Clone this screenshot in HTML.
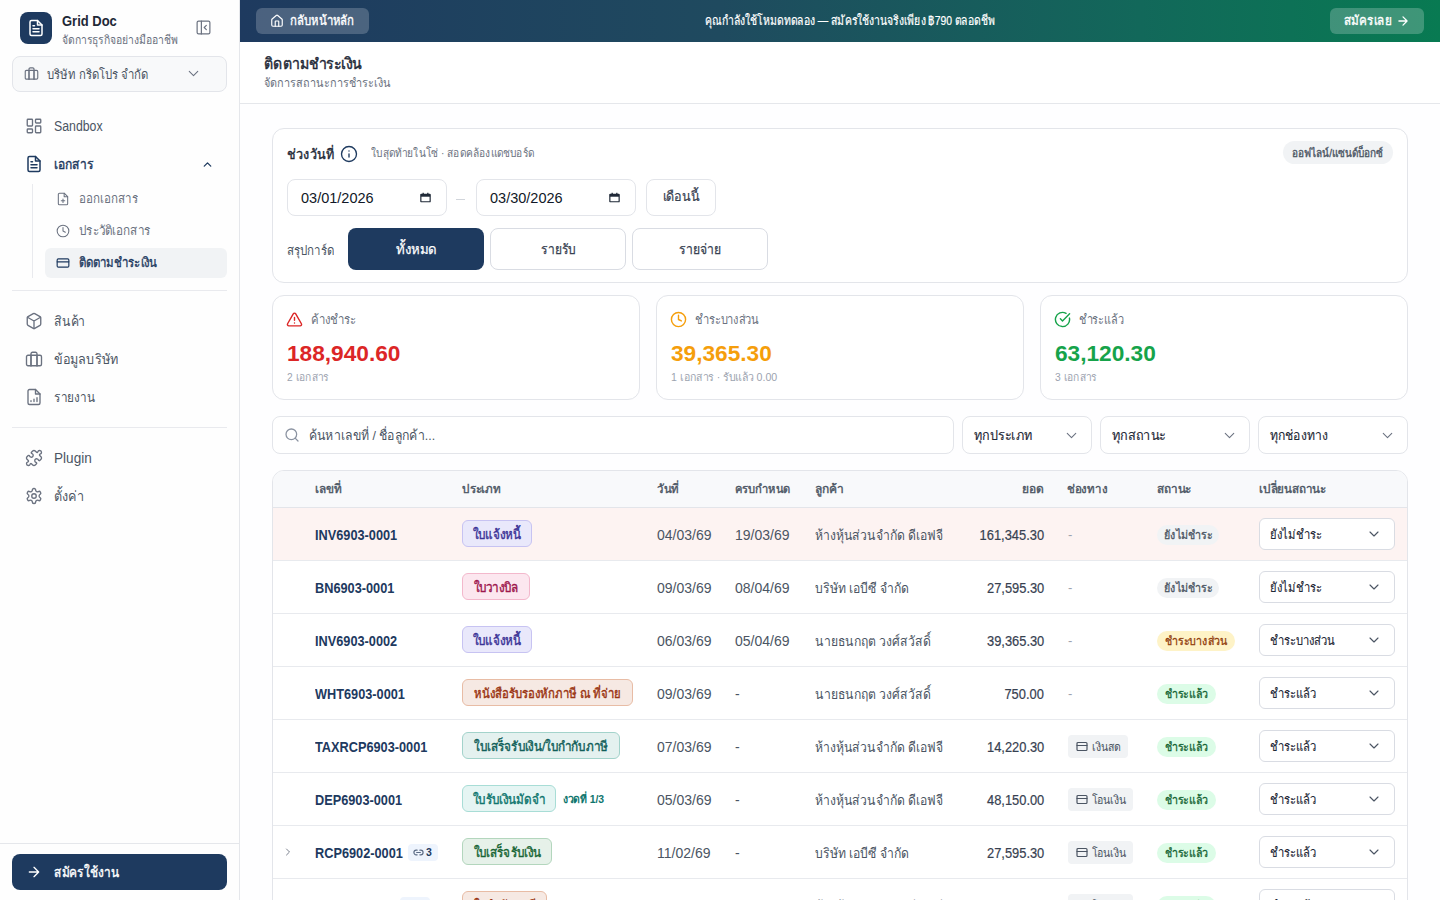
<!DOCTYPE html>
<html><head><meta charset="utf-8"><style>
*{box-sizing:border-box;margin:0;padding:0}
html,body{width:1440px;height:900px;overflow:hidden;background:#fefeff;font-family:"Liberation Sans",sans-serif;color:#1f2937}
.a{position:absolute}
.t{white-space:nowrap}
.k{display:inline-block;transform:scaleX(var(--k));transform-origin:0 50%}
svg{display:block}
.ic{fill:none;stroke:currentColor;stroke-linecap:round;stroke-linejoin:round}
</style></head><body>
<div class="a" style="left:0px;top:0px;width:240px;height:900px;background:#fefefe;border-right:1px solid #e5e7eb"></div>
<div class="a" style="left:20px;top:12px;width:32px;height:32px;border-radius:8px;background:#1e3a5f"></div>
<svg class="a ic" style="left:27px;top:19px;color:#fff;" width="18" height="18" viewBox="0 0 24 24" stroke-width="2"><path d="M14 2H6a2 2 0 0 0-2 2v16a2 2 0 0 0 2 2h12a2 2 0 0 0 2-2V8z"/><path d="M14 2v6h6"/><path d="M16 13H8M16 17H8M10 9H8"/></svg>
<div class="a t" style="left:62px;top:12px;font-size:15px;line-height:18px;color:#1f2937;font-weight:bold;"><span class="k" style="--k:0.865">Grid Doc</span></div>
<div class="a t" style="left:62px;top:32px;font-size:12px;line-height:16px;color:#6b7280;font-weight:normal;"><span class="k" style="--k:0.865">จัดการธุรกิจอย่างมืออาชีพ</span></div>
<svg class="a ic" style="left:195px;top:19px;color:#6b7280;" width="17" height="17" viewBox="0 0 24 24" stroke-width="1.7"><rect x="3" y="3" width="18" height="18" rx="2"/><path d="M9 3v18M16 15l-3-3 3-3"/></svg>
<div class="a" style="left:12px;top:56px;width:215px;height:36px;border:1px solid #e3e5ea;border-radius:8px;background:#f8f9fa"></div>
<svg class="a ic" style="left:24px;top:66px;color:#6b7280;" width="15" height="15" viewBox="0 0 24 24" stroke-width="1.8"><rect x="2" y="7" width="20" height="14" rx="2"/><path d="M16 21V5a2 2 0 0 0-2-2h-4a2 2 0 0 0-2 2v16"/><path d="M8 7v14M16 7v14"/></svg>
<div class="a t" style="left:47px;top:66px;font-size:13px;line-height:17px;color:#4b5563;font-weight:normal;"><span class="k" style="--k:0.87">บริษัท กริดโปร จำกัด</span></div>
<svg class="a ic" style="left:185px;top:65px;color:#6b7280;" width="17" height="17" viewBox="0 0 24 24" stroke-width="1.5"><path d="M6 9l6 6 6-6"/></svg>
<svg class="a ic" style="left:25px;top:117px;color:#6b7280;" width="18" height="18" viewBox="0 0 24 24" stroke-width="1.8"><rect x="3" y="3" width="7" height="9" rx="1"/><rect x="14" y="3" width="7" height="5" rx="1"/><rect x="14" y="12" width="7" height="9" rx="1"/><rect x="3" y="16" width="7" height="5" rx="1"/></svg>
<div class="a t" style="left:54px;top:117px;font-size:14px;line-height:18px;color:#4b5563;font-weight:normal;"><span class="k" style="--k:0.88">Sandbox</span></div>
<svg class="a ic" style="left:25px;top:155px;color:#1e3a5f;" width="18" height="18" viewBox="0 0 24 24" stroke-width="2"><path d="M14 2H6a2 2 0 0 0-2 2v16a2 2 0 0 0 2 2h12a2 2 0 0 0 2-2V8z"/><path d="M14 2v6h6"/><path d="M16 13H8M16 17H8M10 9H8"/></svg>
<div class="a t" style="left:54px;top:155px;font-size:14px;line-height:18px;color:#1e3a5f;font-weight:normal;-webkit-text-stroke:0.45px #1e3a5f;"><span class="k" style="--k:0.86">เอกสาร</span></div>
<svg class="a ic" style="left:201px;top:158px;color:#1e3a5f;" width="13" height="13" viewBox="0 0 24 24" stroke-width="2.4"><path d="M18 15l-6-6-6 6"/></svg>
<div class="a" style="left:32px;top:184px;width:1px;height:94px;background:#e9eaee"></div>
<svg class="a ic" style="left:56px;top:192px;color:#6b7280;" width="14" height="14" viewBox="0 0 24 24" stroke-width="1.8"><path d="M14 2H6a2 2 0 0 0-2 2v16a2 2 0 0 0 2 2h12a2 2 0 0 0 2-2V8z"/><path d="M14 2v6h6"/><path d="M12 18v-6M9 15h6"/></svg>
<div class="a t" style="left:79px;top:190px;font-size:13px;line-height:17px;color:#6b7280;font-weight:normal;"><span class="k" style="--k:0.89">ออกเอกสาร</span></div>
<svg class="a ic" style="left:56px;top:224px;color:#6b7280;" width="14" height="14" viewBox="0 0 24 24" stroke-width="1.8"><circle cx="12" cy="12" r="10"/><path d="M12 6v6l4 2"/></svg>
<div class="a t" style="left:79px;top:222px;font-size:13px;line-height:17px;color:#6b7280;font-weight:normal;"><span class="k" style="--k:0.9">ประวัติเอกสาร</span></div>
<div class="a" style="left:45px;top:248px;width:182px;height:30px;background:#f1f3f5;border-radius:6px"></div>
<svg class="a ic" style="left:56px;top:256px;color:#1e3a5f;" width="14" height="14" viewBox="0 0 24 24" stroke-width="2"><rect x="2" y="5" width="20" height="14" rx="2"/><path d="M2 10h20"/></svg>
<div class="a t" style="left:79px;top:254px;font-size:13px;line-height:17px;color:#1e3a5f;font-weight:normal;-webkit-text-stroke:0.35px #1e3a5f;"><span class="k" style="--k:0.88">ติดตามชำระเงิน</span></div>
<div class="a" style="left:12px;top:290px;width:215px;height:1px;background:#e9eaee"></div>
<svg class="a ic" style="left:25px;top:312px;color:#6b7280;" width="18" height="18" viewBox="0 0 24 24" stroke-width="1.8"><path d="M21 16V8a2 2 0 0 0-1-1.73l-7-4a2 2 0 0 0-2 0l-7 4A2 2 0 0 0 3 8v8a2 2 0 0 0 1 1.73l7 4a2 2 0 0 0 2 0l7-4A2 2 0 0 0 21 16z"/><path d="M3.3 7L12 12l8.7-5M12 22V12"/></svg>
<div class="a t" style="left:54px;top:312px;font-size:14px;line-height:18px;color:#4b5563;font-weight:normal;"><span class="k" style="--k:0.87">สินค้า</span></div>
<svg class="a ic" style="left:25px;top:350px;color:#6b7280;" width="18" height="18" viewBox="0 0 24 24" stroke-width="1.8"><rect x="2" y="7" width="20" height="14" rx="2"/><path d="M16 21V5a2 2 0 0 0-2-2h-4a2 2 0 0 0-2 2v16"/><path d="M8 7v14M16 7v14"/></svg>
<div class="a t" style="left:54px;top:350px;font-size:14px;line-height:18px;color:#4b5563;font-weight:normal;"><span class="k" style="--k:0.9">ข้อมูลบริษัท</span></div>
<svg class="a ic" style="left:25px;top:388px;color:#6b7280;" width="18" height="18" viewBox="0 0 24 24" stroke-width="1.8"><path d="M14 2H6a2 2 0 0 0-2 2v16a2 2 0 0 0 2 2h12a2 2 0 0 0 2-2V8z"/><path d="M14 2v6h6"/><path d="M8 18v-1M12 18v-3M16 18v-5"/></svg>
<div class="a t" style="left:54px;top:388px;font-size:14px;line-height:18px;color:#4b5563;font-weight:normal;"><span class="k" style="--k:0.84">รายงาน</span></div>
<div class="a" style="left:12px;top:427px;width:215px;height:1px;background:#e9eaee"></div>
<svg class="a ic" style="left:25px;top:449px;color:#6b7280;" width="18" height="18" viewBox="0 0 24 24" stroke-width="1.8"><path d="M15.39 4.39a1 1 0 0 0 1.68-.47 2.5 2.5 0 1 1 3.01 3.01 1 1 0 0 0-.47 1.68l1.68 1.68a2.41 2.41 0 0 1 0 3.42l-1.61 1.61a.98.98 0 0 1-.84.28c-.47-.07-.8-.48-.97-.92a2.5 2.5 0 1 0-3.21 3.21c.44.17.85.5.92.97a.98.98 0 0 1-.28.84l-1.61 1.61a2.41 2.41 0 0 1-3.42 0l-1.68-1.68a1 1 0 0 0-1.68.47 2.5 2.5 0 1 1-3.01-3.01 1 1 0 0 0 .47-1.68l-1.68-1.68a2.41 2.41 0 0 1 0-3.42L4.27 8.7a.98.98 0 0 1 .84-.28c.47.07.8.48.97.92a2.5 2.5 0 1 0 3.21-3.21c-.44-.17-.85-.5-.92-.97a.98.98 0 0 1 .28-.84l1.61-1.61a2.41 2.41 0 0 1 3.42 0z"/></svg>
<div class="a t" style="left:54px;top:449px;font-size:14px;line-height:18px;color:#4b5563;font-weight:normal;"><span class="k" style="--k:0.97">Plugin</span></div>
<svg class="a ic" style="left:25px;top:487px;color:#6b7280;" width="18" height="18" viewBox="0 0 24 24" stroke-width="1.8"><path d="M12.22 2h-.44a2 2 0 0 0-2 2v.18a2 2 0 0 1-1 1.73l-.43.25a2 2 0 0 1-2 0l-.15-.08a2 2 0 0 0-2.73.73l-.22.38a2 2 0 0 0 .73 2.73l.15.1a2 2 0 0 1 1 1.72v.51a2 2 0 0 1-1 1.74l-.15.09a2 2 0 0 0-.73 2.73l.22.38a2 2 0 0 0 2.73.73l.15-.08a2 2 0 0 1 2 0l.43.25a2 2 0 0 1 1 1.73V20a2 2 0 0 0 2 2h.44a2 2 0 0 0 2-2v-.18a2 2 0 0 1 1-1.73l.43-.25a2 2 0 0 1 2 0l.15.08a2 2 0 0 0 2.73-.73l.22-.39a2 2 0 0 0-.73-2.73l-.15-.08a2 2 0 0 1-1-1.74v-.5a2 2 0 0 1 1-1.74l.15-.09a2 2 0 0 0 .73-2.73l-.22-.38a2 2 0 0 0-2.73-.73l-.15.08a2 2 0 0 1-2 0l-.43-.25a2 2 0 0 1-1-1.73V4a2 2 0 0 0-2-2z"/><circle cx="12" cy="12" r="3"/></svg>
<div class="a t" style="left:54px;top:487px;font-size:14px;line-height:18px;color:#4b5563;font-weight:normal;"><span class="k" style="--k:0.9">ตั้งค่า</span></div>
<div class="a" style="left:0px;top:843px;width:239px;height:1px;background:#e5e7eb"></div>
<div class="a" style="left:12px;top:854px;width:215px;height:36px;border-radius:8px;background:#1e3a5f"></div>
<svg class="a ic" style="left:26px;top:864px;color:#fff;" width="16" height="16" viewBox="0 0 24 24" stroke-width="2"><path d="M5 12h14M12 5l7 7-7 7"/></svg>
<div class="a t" style="left:54px;top:863px;font-size:14px;line-height:18px;color:#fff;font-weight:normal;-webkit-text-stroke:0.4px #fff;"><span class="k" style="--k:0.85">สมัครใช้งาน</span></div>
<div class="a" style="left:240px;top:0px;width:1200px;height:42px;background:linear-gradient(90deg,#1e3a5f 0%,#1f4a5f 40%,#12685a 75%,#087a52 100%)"></div>
<div class="a" style="left:256px;top:8px;width:113px;height:26px;border-radius:6px;background:rgba(255,255,255,.2)"></div>
<svg class="a ic" style="left:270px;top:14px;color:#fff;" width="14" height="14" viewBox="0 0 24 24" stroke-width="2"><path d="M15 21v-8a1 1 0 0 0-1-1h-4a1 1 0 0 0-1 1v8"/><path d="M3 10a2 2 0 0 1 .71-1.53l7-6a2 2 0 0 1 2.58 0l7 6A2 2 0 0 1 21 10v9a2 2 0 0 1-2 2H5a2 2 0 0 1-2-2z"/></svg>
<div class="a t" style="left:290px;top:12px;font-size:13px;line-height:18px;color:#fff;font-weight:normal;-webkit-text-stroke:0.35px #fff;"><span class="k" style="--k:0.87">กลับหน้าหลัก</span></div>
<div class="a t" style="left:250px;top:12px;font-size:13px;line-height:18px;color:#fff;font-weight:normal;-webkit-text-stroke:0.2px #fff;width:1200px;text-align:center;"><span class="k" style="--k:0.8;transform-origin:center 50%">คุณกำลังใช้โหมดทดลอง — สมัครใช้งานจริงเพียง ฿790 ตลอดชีพ</span></div>
<div class="a" style="left:1330px;top:8px;width:94px;height:26px;border-radius:6px;background:rgba(255,255,255,.22)"></div>
<div class="a t" style="left:1344px;top:12px;font-size:13px;line-height:18px;color:#fff;font-weight:normal;-webkit-text-stroke:0.35px #fff;"><span class="k" style="--k:0.9">สมัครเลย</span></div>
<svg class="a ic" style="left:1396px;top:14px;color:#fff;" width="14" height="14" viewBox="0 0 24 24" stroke-width="2.2"><path d="M5 12h14M12 5l7 7-7 7"/></svg>
<div class="a" style="left:240px;top:42px;width:1200px;height:62px;background:#fff;border-bottom:1px solid #e5e7eb"></div>
<div class="a t" style="left:264px;top:54px;font-size:15px;line-height:20px;color:#1f2937;font-weight:normal;-webkit-text-stroke:0.45px #1f2937;"><span class="k" style="--k:0.94">ติดตามชำระเงิน</span></div>
<div class="a t" style="left:264px;top:75px;font-size:12.5px;line-height:17px;color:#6b7280;font-weight:normal;"><span class="k" style="--k:0.87">จัดการสถานะการชำระเงิน</span></div>
<div class="a" style="left:272px;top:128px;width:1136px;height:155px;background:#fff;border:1px solid #e3e5ea;border-radius:12px"></div>
<div class="a t" style="left:287px;top:145px;font-size:14px;line-height:19px;color:#1f2937;font-weight:normal;-webkit-text-stroke:0.4px #1f2937;"><span class="k" style="--k:0.9">ช่วงวันที่</span></div>
<svg class="a ic" style="left:340px;top:145px;color:#1e3a5f;" width="18" height="18" viewBox="0 0 24 24" stroke-width="1.8"><circle cx="12" cy="12" r="10"/><path d="M12 16v-4M12 8h.01"/></svg>
<div class="a t" style="left:371px;top:145px;font-size:11.5px;line-height:16px;color:#6b7280;font-weight:normal;"><span class="k" style="--k:0.885">ใบสุดท้ายในโซ่ · สอดคล้องแดชบอร์ด</span></div>
<div class="a" style="left:1283px;top:141px;width:110px;height:23px;border-radius:12px;background:#f1f3f5"></div>
<div class="a t" style="left:1283px;top:145px;font-size:11.5px;line-height:17px;color:#4b5563;font-weight:normal;-webkit-text-stroke:0.35px #4b5563;width:110px;text-align:center;"><span class="k" style="--k:0.87;transform-origin:center 50%">ออฟไลน์/แซนด์บ็อกซ์</span></div>
<div class="a" style="left:287px;top:179px;width:160px;height:37px;background:#fff;border:1px solid #e3e5ea;border-radius:8px"></div>
<div class="a t" style="left:301px;top:189px;font-size:14.5px;line-height:18px;color:#111827;font-weight:normal;">03/01/2026</div>
<svg class="a" style="left:420px;top:192px" width="11" height="11" viewBox="0 0 13 14" preserveAspectRatio="none"><path d="M1.5 3h10a.5.5 0 0 1 .5.5V12a.5.5 0 0 1-.5.5h-10A.5.5 0 0 1 1 12V3.5a.5.5 0 0 1 .5-.5z" fill="none" stroke="#1f2937" stroke-width="1.4"/><rect x="1" y="3" width="11" height="3" fill="#1f2937"/><rect x="3" y="1" width="1.5" height="2.5" fill="#1f2937"/><rect x="8.5" y="1" width="1.5" height="2.5" fill="#1f2937"/></svg>
<div class="a" style="left:476px;top:179px;width:160px;height:37px;background:#fff;border:1px solid #e3e5ea;border-radius:8px"></div>
<div class="a t" style="left:490px;top:189px;font-size:14.5px;line-height:18px;color:#111827;font-weight:normal;">03/30/2026</div>
<svg class="a" style="left:609px;top:192px" width="11" height="11" viewBox="0 0 13 14" preserveAspectRatio="none"><path d="M1.5 3h10a.5.5 0 0 1 .5.5V12a.5.5 0 0 1-.5.5h-10A.5.5 0 0 1 1 12V3.5a.5.5 0 0 1 .5-.5z" fill="none" stroke="#1f2937" stroke-width="1.4"/><rect x="1" y="3" width="11" height="3" fill="#1f2937"/><rect x="3" y="1" width="1.5" height="2.5" fill="#1f2937"/><rect x="8.5" y="1" width="1.5" height="2.5" fill="#1f2937"/></svg>
<div class="a" style="left:456px;top:199px;width:9px;height:1px;background:#d1d5db"></div>
<div class="a" style="left:646px;top:179px;width:70px;height:37px;background:#fff;border:1px solid #e3e5ea;border-radius:8px"></div>
<div class="a t" style="left:646px;top:188px;font-size:13px;line-height:18px;color:#374151;font-weight:normal;-webkit-text-stroke:0.2px #374151;width:70px;text-align:center;"><span class="k" style="--k:0.97;transform-origin:center 50%">เดือนนี้</span></div>
<div class="a t" style="left:287px;top:242px;font-size:13px;line-height:18px;color:#4b5563;font-weight:normal;"><span class="k" style="--k:0.885">สรุปการ์ด</span></div>
<div class="a" style="left:348px;top:228px;width:136px;height:42px;background:#1e3a5f;border-radius:8px"></div>
<div class="a t" style="left:348px;top:240px;font-size:14px;line-height:18px;color:#fff;font-weight:normal;-webkit-text-stroke:0.25px #fff;width:136px;text-align:center;"><span class="k" style="--k:0.94;transform-origin:center 50%">ทั้งหมด</span></div>
<div class="a" style="left:490px;top:228px;width:136px;height:42px;background:#fff;border:1px solid #d9dce3;border-radius:8px"></div>
<div class="a t" style="left:490px;top:240px;font-size:14px;line-height:18px;color:#374151;font-weight:normal;-webkit-text-stroke:0.25px #374151;width:136px;text-align:center;"><span class="k" style="--k:0.86;transform-origin:center 50%">รายรับ</span></div>
<div class="a" style="left:632px;top:228px;width:136px;height:42px;background:#fff;border:1px solid #d9dce3;border-radius:8px"></div>
<div class="a t" style="left:632px;top:240px;font-size:14px;line-height:18px;color:#374151;font-weight:normal;-webkit-text-stroke:0.25px #374151;width:136px;text-align:center;"><span class="k" style="--k:0.87;transform-origin:center 50%">รายจ่าย</span></div>
<div class="a" style="left:272px;top:295px;width:368px;height:105px;background:#fff;border:1px solid #e3e5ea;border-radius:12px"></div>
<svg class="a ic" style="left:286px;top:311px;color:#dc2626;" width="17" height="17" viewBox="0 0 24 24" stroke-width="2"><path d="M21.73 18l-8-14a2 2 0 0 0-3.48 0l-8 14A2 2 0 0 0 4 21h16a2 2 0 0 0 1.73-3"/><path d="M12 9v4M12 17h.01"/></svg>
<div class="a t" style="left:311px;top:311px;font-size:13px;line-height:18px;color:#6b7280;font-weight:normal;"><span class="k" style="--k:0.873">ค้างชำระ</span></div>
<div class="a t" style="left:287px;top:340px;font-size:22px;line-height:28px;color:#dc2626;font-weight:bold;"><span class="k" style="--k:1.03">188,940.60</span></div>
<div class="a t" style="left:287px;top:369px;font-size:11.5px;line-height:16px;color:#9ca3af;font-weight:normal;"><span class="k" style="--k:0.89">2 เอกสาร</span></div>
<div class="a" style="left:656px;top:295px;width:368px;height:105px;background:#fff;border:1px solid #e3e5ea;border-radius:12px"></div>
<svg class="a ic" style="left:670px;top:311px;color:#f59e0b;" width="17" height="17" viewBox="0 0 24 24" stroke-width="2"><circle cx="12" cy="12" r="10"/><path d="M12 6v6l4 2"/></svg>
<div class="a t" style="left:695px;top:311px;font-size:13px;line-height:18px;color:#6b7280;font-weight:normal;"><span class="k" style="--k:0.8536">ชำระบางส่วน</span></div>
<div class="a t" style="left:671px;top:340px;font-size:22px;line-height:28px;color:#f59e0b;font-weight:bold;"><span class="k" style="--k:1.03">39,365.30</span></div>
<div class="a t" style="left:671px;top:369px;font-size:11.5px;line-height:16px;color:#9ca3af;font-weight:normal;"><span class="k" style="--k:0.92">1 เอกสาร · รับแล้ว 0.00</span></div>
<div class="a" style="left:1040px;top:295px;width:368px;height:105px;background:#fff;border:1px solid #e3e5ea;border-radius:12px"></div>
<svg class="a ic" style="left:1054px;top:311px;color:#16a34a;" width="17" height="17" viewBox="0 0 24 24" stroke-width="2"><path d="M21.8 10A10 10 0 1 1 17 3.34"/><path d="M9 11l3 3L22 4"/></svg>
<div class="a t" style="left:1079px;top:311px;font-size:13px;line-height:18px;color:#6b7280;font-weight:normal;"><span class="k" style="--k:0.83905">ชำระแล้ว</span></div>
<div class="a t" style="left:1055px;top:340px;font-size:22px;line-height:28px;color:#16a34a;font-weight:bold;"><span class="k" style="--k:1.03">63,120.30</span></div>
<div class="a t" style="left:1055px;top:369px;font-size:11.5px;line-height:16px;color:#9ca3af;font-weight:normal;"><span class="k" style="--k:0.89">3 เอกสาร</span></div>
<div class="a" style="left:272px;top:416px;width:682px;height:38px;background:#fff;border:1px solid #e3e5ea;border-radius:8px"></div>
<svg class="a ic" style="left:284px;top:427px;color:#8b93a1;" width="16" height="16" viewBox="0 0 24 24" stroke-width="1.9"><circle cx="11" cy="11" r="8"/><path d="M21 21l-4.3-4.3"/></svg>
<div class="a t" style="left:309px;top:427px;font-size:13.5px;line-height:18px;color:#4b5563;font-weight:normal;"><span class="k" style="--k:0.91">ค้นหาเลขที่ / ชื่อลูกค้า...</span></div>
<div class="a" style="left:962px;top:416px;width:130px;height:38px;background:#fff;border:1px solid #e3e5ea;border-radius:8px"></div>
<div class="a t" style="left:974px;top:427px;font-size:13.5px;line-height:18px;color:#1f2937;font-weight:normal;-webkit-text-stroke:0.15px #1f2937;"><span class="k" style="--k:0.935">ทุกประเภท</span></div>
<svg class="a ic" style="left:1063px;top:427px;color:#6b7280;" width="17" height="17" viewBox="0 0 24 24" stroke-width="1.5"><path d="M6 9l6 6 6-6"/></svg>
<div class="a" style="left:1100px;top:416px;width:150px;height:38px;background:#fff;border:1px solid #e3e5ea;border-radius:8px"></div>
<div class="a t" style="left:1112px;top:427px;font-size:13.5px;line-height:18px;color:#1f2937;font-weight:normal;-webkit-text-stroke:0.15px #1f2937;"><span class="k" style="--k:0.94">ทุกสถานะ</span></div>
<svg class="a ic" style="left:1221px;top:427px;color:#6b7280;" width="17" height="17" viewBox="0 0 24 24" stroke-width="1.5"><path d="M6 9l6 6 6-6"/></svg>
<div class="a" style="left:1258px;top:416px;width:150px;height:38px;background:#fff;border:1px solid #e3e5ea;border-radius:8px"></div>
<div class="a t" style="left:1270px;top:427px;font-size:13.5px;line-height:18px;color:#1f2937;font-weight:normal;-webkit-text-stroke:0.15px #1f2937;"><span class="k" style="--k:0.9">ทุกช่องทาง</span></div>
<svg class="a ic" style="left:1379px;top:427px;color:#6b7280;" width="17" height="17" viewBox="0 0 24 24" stroke-width="1.5"><path d="M6 9l6 6 6-6"/></svg>
<div class="a" style="left:272px;top:470px;width:1136px;height:440px;border:1px solid #e3e5ea;border-radius:12px 12px 0 0;background:#fff;overflow:hidden"><div class="a" style="left:0;top:0;width:1134px;height:37px;background:#f8f9fb;border-bottom:1px solid #e3e5ea"></div></div>
<div class="a t" style="left:315px;top:480px;font-size:12px;line-height:18px;color:#4b5563;font-weight:normal;-webkit-text-stroke:0.4px #4b5563;"><span class="k" style="--k:0.98">เลขที่</span></div>
<div class="a t" style="left:462px;top:480px;font-size:12px;line-height:18px;color:#4b5563;font-weight:normal;-webkit-text-stroke:0.4px #4b5563;"><span class="k" style="--k:0.97">ประเภท</span></div>
<div class="a t" style="left:657px;top:480px;font-size:12px;line-height:18px;color:#4b5563;font-weight:normal;-webkit-text-stroke:0.4px #4b5563;"><span class="k" style="--k:0.95">วันที่</span></div>
<div class="a t" style="left:735px;top:480px;font-size:12px;line-height:18px;color:#4b5563;font-weight:normal;-webkit-text-stroke:0.4px #4b5563;"><span class="k" style="--k:0.93">ครบกำหนด</span></div>
<div class="a t" style="left:815px;top:480px;font-size:12px;line-height:18px;color:#4b5563;font-weight:normal;-webkit-text-stroke:0.4px #4b5563;">ลูกค้า</div>
<div class="a t" style="left:1067px;top:480px;font-size:12px;line-height:18px;color:#4b5563;font-weight:normal;-webkit-text-stroke:0.4px #4b5563;"><span class="k" style="--k:0.96">ช่องทาง</span></div>
<div class="a t" style="left:1157px;top:480px;font-size:12px;line-height:18px;color:#4b5563;font-weight:normal;-webkit-text-stroke:0.4px #4b5563;"><span class="k" style="--k:0.98">สถานะ</span></div>
<div class="a t" style="left:1259px;top:480px;font-size:12px;line-height:18px;color:#4b5563;font-weight:normal;-webkit-text-stroke:0.4px #4b5563;"><span class="k" style="--k:0.97">เปลี่ยนสถานะ</span></div>
<div class="a t" style="left:943px;top:480px;font-size:12px;line-height:18px;color:#4b5563;font-weight:normal;-webkit-text-stroke:0.4px #4b5563;width:101px;text-align:right;">ยอด</div>
<div class="a" style="left:273px;top:508px;width:1134px;height:53px;background:#fdf3f2;border-bottom:1px solid #e8eaee"></div>
<div class="a t" style="left:315px;top:526px;font-size:14px;line-height:18px;color:#1e3a5f;font-weight:bold;"><span class="k" style="--k:0.91">INV6903-0001</span></div>
<div class="a" style="left:462px;top:520px;width:70px;height:27px;border-radius:6px;border:1px solid #c7c3f2;background:#e9e8fb"></div>
<div class="a t" style="left:462px;top:526px;font-size:13px;line-height:18px;color:#3b3397;font-weight:normal;-webkit-text-stroke:0.4px #3b3397;width:70px;text-align:center;"><span class="k" style="--k:0.9;transform-origin:center 50%">ใบแจ้งหนี้</span></div>
<div class="a t" style="left:657px;top:526px;font-size:14px;line-height:18px;color:#4b5563;font-weight:normal;">04/03/69</div>
<div class="a t" style="left:735px;top:526px;font-size:14px;line-height:18px;color:#4b5563;font-weight:normal;">19/03/69</div>
<div class="a t" style="left:815px;top:526px;font-size:14px;line-height:18px;color:#4b5563;font-weight:normal;"><span class="k" style="--k:0.87">ห้างหุ้นส่วนจำกัด ดีเอฟจี</span></div>
<div class="a t" style="left:900px;top:526px;font-size:14px;line-height:18px;color:#374151;font-weight:normal;-webkit-text-stroke:0.2px #374151;width:144px;text-align:right;"><span class="k" style="--k:0.92;transform-origin:100% 50%">161,345.30</span></div>
<div class="a t" style="left:1068px;top:526px;font-size:13px;line-height:18px;color:#9ca3af;font-weight:normal;">-</div>
<div class="a" style="left:1157px;top:525px;width:62px;height:20px;border-radius:10px;background:#f1f3f5"></div>
<div class="a t" style="left:1157px;top:527px;font-size:12px;line-height:16px;color:#4b5563;font-weight:normal;-webkit-text-stroke:0.3px #4b5563;width:62px;text-align:center;"><span class="k" style="--k:0.89;transform-origin:center 50%">ยังไม่ชำระ</span></div>
<div class="a" style="left:1259px;top:518px;width:136px;height:32px;background:#fff;border:1px solid #d9dce3;border-radius:6px"></div>
<div class="a t" style="left:1270px;top:526px;font-size:13px;line-height:18px;color:#1f2937;font-weight:normal;-webkit-text-stroke:0.15px #1f2937;"><span class="k" style="--k:0.86">ยังไม่ชำระ</span></div>
<svg class="a ic" style="left:1366px;top:526px;color:#4b5563;" width="16" height="16" viewBox="0 0 24 24" stroke-width="1.7"><path d="M6 9l6 6 6-6"/></svg>
<div class="a" style="left:273px;top:561px;width:1134px;height:53px;background:#fff;border-bottom:1px solid #e8eaee"></div>
<div class="a t" style="left:315px;top:579px;font-size:14px;line-height:18px;color:#1e3a5f;font-weight:bold;"><span class="k" style="--k:0.91">BN6903-0001</span></div>
<div class="a" style="left:462px;top:573px;width:68px;height:27px;border-radius:6px;border:1px solid #f3b8cc;background:#fce7ef"></div>
<div class="a t" style="left:462px;top:579px;font-size:13px;line-height:18px;color:#9d174d;font-weight:normal;-webkit-text-stroke:0.4px #9d174d;width:68px;text-align:center;"><span class="k" style="--k:0.9;transform-origin:center 50%">ใบวางบิล</span></div>
<div class="a t" style="left:657px;top:579px;font-size:14px;line-height:18px;color:#4b5563;font-weight:normal;">09/03/69</div>
<div class="a t" style="left:735px;top:579px;font-size:14px;line-height:18px;color:#4b5563;font-weight:normal;">08/04/69</div>
<div class="a t" style="left:815px;top:579px;font-size:14px;line-height:18px;color:#4b5563;font-weight:normal;"><span class="k" style="--k:0.87">บริษัท เอบีซี จำกัด</span></div>
<div class="a t" style="left:900px;top:579px;font-size:14px;line-height:18px;color:#374151;font-weight:normal;-webkit-text-stroke:0.2px #374151;width:144px;text-align:right;"><span class="k" style="--k:0.92;transform-origin:100% 50%">27,595.30</span></div>
<div class="a t" style="left:1068px;top:579px;font-size:13px;line-height:18px;color:#9ca3af;font-weight:normal;">-</div>
<div class="a" style="left:1157px;top:578px;width:62px;height:20px;border-radius:10px;background:#f1f3f5"></div>
<div class="a t" style="left:1157px;top:580px;font-size:12px;line-height:16px;color:#4b5563;font-weight:normal;-webkit-text-stroke:0.3px #4b5563;width:62px;text-align:center;"><span class="k" style="--k:0.89;transform-origin:center 50%">ยังไม่ชำระ</span></div>
<div class="a" style="left:1259px;top:571px;width:136px;height:32px;background:#fff;border:1px solid #d9dce3;border-radius:6px"></div>
<div class="a t" style="left:1270px;top:579px;font-size:13px;line-height:18px;color:#1f2937;font-weight:normal;-webkit-text-stroke:0.15px #1f2937;"><span class="k" style="--k:0.86">ยังไม่ชำระ</span></div>
<svg class="a ic" style="left:1366px;top:579px;color:#4b5563;" width="16" height="16" viewBox="0 0 24 24" stroke-width="1.7"><path d="M6 9l6 6 6-6"/></svg>
<div class="a" style="left:273px;top:614px;width:1134px;height:53px;background:#fff;border-bottom:1px solid #e8eaee"></div>
<div class="a t" style="left:315px;top:632px;font-size:14px;line-height:18px;color:#1e3a5f;font-weight:bold;"><span class="k" style="--k:0.91">INV6903-0002</span></div>
<div class="a" style="left:462px;top:626px;width:70px;height:27px;border-radius:6px;border:1px solid #c7c3f2;background:#e9e8fb"></div>
<div class="a t" style="left:462px;top:632px;font-size:13px;line-height:18px;color:#3b3397;font-weight:normal;-webkit-text-stroke:0.4px #3b3397;width:70px;text-align:center;"><span class="k" style="--k:0.9;transform-origin:center 50%">ใบแจ้งหนี้</span></div>
<div class="a t" style="left:657px;top:632px;font-size:14px;line-height:18px;color:#4b5563;font-weight:normal;">06/03/69</div>
<div class="a t" style="left:735px;top:632px;font-size:14px;line-height:18px;color:#4b5563;font-weight:normal;">05/04/69</div>
<div class="a t" style="left:815px;top:632px;font-size:14px;line-height:18px;color:#4b5563;font-weight:normal;"><span class="k" style="--k:0.87">นายธนกฤต วงศ์สวัสดิ์</span></div>
<div class="a t" style="left:900px;top:632px;font-size:14px;line-height:18px;color:#374151;font-weight:normal;-webkit-text-stroke:0.2px #374151;width:144px;text-align:right;"><span class="k" style="--k:0.92;transform-origin:100% 50%">39,365.30</span></div>
<div class="a t" style="left:1068px;top:632px;font-size:13px;line-height:18px;color:#9ca3af;font-weight:normal;">-</div>
<div class="a" style="left:1157px;top:631px;width:78px;height:20px;border-radius:10px;background:#fef3c7"></div>
<div class="a t" style="left:1157px;top:633px;font-size:12px;line-height:16px;color:#92400e;font-weight:normal;-webkit-text-stroke:0.3px #92400e;width:78px;text-align:center;"><span class="k" style="--k:0.89;transform-origin:center 50%">ชำระบางส่วน</span></div>
<div class="a" style="left:1259px;top:624px;width:136px;height:32px;background:#fff;border:1px solid #d9dce3;border-radius:6px"></div>
<div class="a t" style="left:1270px;top:632px;font-size:13px;line-height:18px;color:#1f2937;font-weight:normal;-webkit-text-stroke:0.15px #1f2937;"><span class="k" style="--k:0.86">ชำระบางส่วน</span></div>
<svg class="a ic" style="left:1366px;top:632px;color:#4b5563;" width="16" height="16" viewBox="0 0 24 24" stroke-width="1.7"><path d="M6 9l6 6 6-6"/></svg>
<div class="a" style="left:273px;top:667px;width:1134px;height:53px;background:#fff;border-bottom:1px solid #e8eaee"></div>
<div class="a t" style="left:315px;top:685px;font-size:14px;line-height:18px;color:#1e3a5f;font-weight:bold;"><span class="k" style="--k:0.91">WHT6903-0001</span></div>
<div class="a" style="left:462px;top:679px;width:171px;height:27px;border-radius:6px;border:1px solid #e8bca5;background:#f6e9e3"></div>
<div class="a t" style="left:462px;top:685px;font-size:13px;line-height:18px;color:#9a3412;font-weight:normal;-webkit-text-stroke:0.4px #9a3412;width:171px;text-align:center;"><span class="k" style="--k:0.87;transform-origin:center 50%">หนังสือรับรองหักภาษี ณ ที่จ่าย</span></div>
<div class="a t" style="left:657px;top:685px;font-size:14px;line-height:18px;color:#4b5563;font-weight:normal;">09/03/69</div>
<div class="a t" style="left:735px;top:685px;font-size:14px;line-height:18px;color:#4b5563;font-weight:normal;">-</div>
<div class="a t" style="left:815px;top:685px;font-size:14px;line-height:18px;color:#4b5563;font-weight:normal;"><span class="k" style="--k:0.87">นายธนกฤต วงศ์สวัสดิ์</span></div>
<div class="a t" style="left:900px;top:685px;font-size:14px;line-height:18px;color:#374151;font-weight:normal;-webkit-text-stroke:0.2px #374151;width:144px;text-align:right;"><span class="k" style="--k:0.92;transform-origin:100% 50%">750.00</span></div>
<div class="a t" style="left:1068px;top:685px;font-size:13px;line-height:18px;color:#9ca3af;font-weight:normal;">-</div>
<div class="a" style="left:1157px;top:684px;width:59px;height:20px;border-radius:10px;background:#dcfce7"></div>
<div class="a t" style="left:1157px;top:686px;font-size:12px;line-height:16px;color:#166534;font-weight:normal;-webkit-text-stroke:0.3px #166534;width:59px;text-align:center;"><span class="k" style="--k:0.89;transform-origin:center 50%">ชำระแล้ว</span></div>
<div class="a" style="left:1259px;top:677px;width:136px;height:32px;background:#fff;border:1px solid #d9dce3;border-radius:6px"></div>
<div class="a t" style="left:1270px;top:685px;font-size:13px;line-height:18px;color:#1f2937;font-weight:normal;-webkit-text-stroke:0.15px #1f2937;"><span class="k" style="--k:0.86">ชำระแล้ว</span></div>
<svg class="a ic" style="left:1366px;top:685px;color:#4b5563;" width="16" height="16" viewBox="0 0 24 24" stroke-width="1.7"><path d="M6 9l6 6 6-6"/></svg>
<div class="a" style="left:273px;top:720px;width:1134px;height:53px;background:#fff;border-bottom:1px solid #e8eaee"></div>
<div class="a t" style="left:315px;top:738px;font-size:14px;line-height:18px;color:#1e3a5f;font-weight:bold;"><span class="k" style="--k:0.91">TAXRCP6903-0001</span></div>
<div class="a" style="left:462px;top:732px;width:158px;height:27px;border-radius:6px;border:1px solid #a3d3cb;background:#e4f1ef"></div>
<div class="a t" style="left:462px;top:738px;font-size:13px;line-height:18px;color:#115e59;font-weight:normal;-webkit-text-stroke:0.4px #115e59;width:158px;text-align:center;"><span class="k" style="--k:0.9;transform-origin:center 50%">ใบเสร็จรับเงิน/ใบกำกับภาษี</span></div>
<div class="a t" style="left:657px;top:738px;font-size:14px;line-height:18px;color:#4b5563;font-weight:normal;">07/03/69</div>
<div class="a t" style="left:735px;top:738px;font-size:14px;line-height:18px;color:#4b5563;font-weight:normal;">-</div>
<div class="a t" style="left:815px;top:738px;font-size:14px;line-height:18px;color:#4b5563;font-weight:normal;"><span class="k" style="--k:0.87">ห้างหุ้นส่วนจำกัด ดีเอฟจี</span></div>
<div class="a t" style="left:900px;top:738px;font-size:14px;line-height:18px;color:#374151;font-weight:normal;-webkit-text-stroke:0.2px #374151;width:144px;text-align:right;"><span class="k" style="--k:0.92;transform-origin:100% 50%">14,220.30</span></div>
<div class="a" style="left:1068px;top:735px;width:60px;height:23px;border-radius:4px;background:#f1f3f5"></div>
<svg class="a ic" style="left:1076px;top:741px;color:#4b5563;" width="12" height="11" viewBox="0 0 24 22" stroke-width="2.4"><rect x="2" y="3" width="20" height="16" rx="2"/><path d="M2 9h20"/></svg>
<div class="a t" style="left:1092px;top:739px;font-size:12px;line-height:16px;color:#4b5563;font-weight:normal;"><span class="k" style="--k:0.88">เงินสด</span></div>
<div class="a" style="left:1157px;top:737px;width:59px;height:20px;border-radius:10px;background:#dcfce7"></div>
<div class="a t" style="left:1157px;top:739px;font-size:12px;line-height:16px;color:#166534;font-weight:normal;-webkit-text-stroke:0.3px #166534;width:59px;text-align:center;"><span class="k" style="--k:0.89;transform-origin:center 50%">ชำระแล้ว</span></div>
<div class="a" style="left:1259px;top:730px;width:136px;height:32px;background:#fff;border:1px solid #d9dce3;border-radius:6px"></div>
<div class="a t" style="left:1270px;top:738px;font-size:13px;line-height:18px;color:#1f2937;font-weight:normal;-webkit-text-stroke:0.15px #1f2937;"><span class="k" style="--k:0.86">ชำระแล้ว</span></div>
<svg class="a ic" style="left:1366px;top:738px;color:#4b5563;" width="16" height="16" viewBox="0 0 24 24" stroke-width="1.7"><path d="M6 9l6 6 6-6"/></svg>
<div class="a" style="left:273px;top:773px;width:1134px;height:53px;background:#fff;border-bottom:1px solid #e8eaee"></div>
<div class="a t" style="left:315px;top:791px;font-size:14px;line-height:18px;color:#1e3a5f;font-weight:bold;"><span class="k" style="--k:0.91">DEP6903-0001</span></div>
<div class="a" style="left:462px;top:785px;width:94px;height:27px;border-radius:6px;border:1px solid #a8ddd6;background:#e5f5f3"></div>
<div class="a t" style="left:462px;top:791px;font-size:13px;line-height:18px;color:#0f766e;font-weight:normal;-webkit-text-stroke:0.4px #0f766e;width:94px;text-align:center;"><span class="k" style="--k:0.9;transform-origin:center 50%">ใบรับเงินมัดจำ</span></div>
<div class="a t" style="left:563px;top:791px;font-size:11px;line-height:16px;color:#0f766e;font-weight:bold;"><span class="k" style="--k:0.95">งวดที่ 1/3</span></div>
<div class="a t" style="left:657px;top:791px;font-size:14px;line-height:18px;color:#4b5563;font-weight:normal;">05/03/69</div>
<div class="a t" style="left:735px;top:791px;font-size:14px;line-height:18px;color:#4b5563;font-weight:normal;">-</div>
<div class="a t" style="left:815px;top:791px;font-size:14px;line-height:18px;color:#4b5563;font-weight:normal;"><span class="k" style="--k:0.87">ห้างหุ้นส่วนจำกัด ดีเอฟจี</span></div>
<div class="a t" style="left:900px;top:791px;font-size:14px;line-height:18px;color:#374151;font-weight:normal;-webkit-text-stroke:0.2px #374151;width:144px;text-align:right;"><span class="k" style="--k:0.92;transform-origin:100% 50%">48,150.00</span></div>
<div class="a" style="left:1068px;top:788px;width:65px;height:23px;border-radius:4px;background:#f1f3f5"></div>
<svg class="a ic" style="left:1076px;top:794px;color:#4b5563;" width="12" height="11" viewBox="0 0 24 22" stroke-width="2.4"><rect x="2" y="3" width="20" height="16" rx="2"/><path d="M2 9h20"/></svg>
<div class="a t" style="left:1092px;top:792px;font-size:12px;line-height:16px;color:#4b5563;font-weight:normal;"><span class="k" style="--k:0.88">โอนเงิน</span></div>
<div class="a" style="left:1157px;top:790px;width:59px;height:20px;border-radius:10px;background:#dcfce7"></div>
<div class="a t" style="left:1157px;top:792px;font-size:12px;line-height:16px;color:#166534;font-weight:normal;-webkit-text-stroke:0.3px #166534;width:59px;text-align:center;"><span class="k" style="--k:0.89;transform-origin:center 50%">ชำระแล้ว</span></div>
<div class="a" style="left:1259px;top:783px;width:136px;height:32px;background:#fff;border:1px solid #d9dce3;border-radius:6px"></div>
<div class="a t" style="left:1270px;top:791px;font-size:13px;line-height:18px;color:#1f2937;font-weight:normal;-webkit-text-stroke:0.15px #1f2937;"><span class="k" style="--k:0.86">ชำระแล้ว</span></div>
<svg class="a ic" style="left:1366px;top:791px;color:#4b5563;" width="16" height="16" viewBox="0 0 24 24" stroke-width="1.7"><path d="M6 9l6 6 6-6"/></svg>
<div class="a" style="left:273px;top:826px;width:1134px;height:53px;background:#fff;border-bottom:1px solid #e8eaee"></div>
<svg class="a ic" style="left:282px;top:845px;color:#6b7280;" width="12" height="14" viewBox="0 0 24 24" stroke-width="1.8"><path d="M9 18l6-6-6-6"/></svg>
<div class="a t" style="left:315px;top:844px;font-size:14px;line-height:18px;color:#1e3a5f;font-weight:bold;"><span class="k" style="--k:0.91">RCP6902-0001</span></div>
<div class="a" style="left:408px;top:844px;width:30px;height:17px;border-radius:4px;background:#eef4fd"></div>
<svg class="a ic" style="left:413px;top:848px;color:#5b6b85;" width="11" height="9" viewBox="0 4 24 16" stroke-width="2.6"><path d="M9 17H7A5 5 0 0 1 7 7h2M15 7h2a5 5 0 1 1 0 10h-2M8 12h8"/></svg>
<div class="a t" style="left:426px;top:845px;font-size:10.5px;line-height:15px;color:#1e3a5f;font-weight:bold;">3</div>
<div class="a" style="left:462px;top:838px;width:90px;height:27px;border-radius:6px;border:1px solid #b3d6bd;background:#e6f1e9"></div>
<div class="a t" style="left:462px;top:844px;font-size:13px;line-height:18px;color:#166534;font-weight:normal;-webkit-text-stroke:0.4px #166534;width:90px;text-align:center;"><span class="k" style="--k:0.9;transform-origin:center 50%">ใบเสร็จรับเงิน</span></div>
<div class="a t" style="left:657px;top:844px;font-size:14px;line-height:18px;color:#4b5563;font-weight:normal;">11/02/69</div>
<div class="a t" style="left:735px;top:844px;font-size:14px;line-height:18px;color:#4b5563;font-weight:normal;">-</div>
<div class="a t" style="left:815px;top:844px;font-size:14px;line-height:18px;color:#4b5563;font-weight:normal;"><span class="k" style="--k:0.87">บริษัท เอบีซี จำกัด</span></div>
<div class="a t" style="left:900px;top:844px;font-size:14px;line-height:18px;color:#374151;font-weight:normal;-webkit-text-stroke:0.2px #374151;width:144px;text-align:right;"><span class="k" style="--k:0.92;transform-origin:100% 50%">27,595.30</span></div>
<div class="a" style="left:1068px;top:841px;width:65px;height:23px;border-radius:4px;background:#f1f3f5"></div>
<svg class="a ic" style="left:1076px;top:847px;color:#4b5563;" width="12" height="11" viewBox="0 0 24 22" stroke-width="2.4"><rect x="2" y="3" width="20" height="16" rx="2"/><path d="M2 9h20"/></svg>
<div class="a t" style="left:1092px;top:845px;font-size:12px;line-height:16px;color:#4b5563;font-weight:normal;"><span class="k" style="--k:0.88">โอนเงิน</span></div>
<div class="a" style="left:1157px;top:843px;width:59px;height:20px;border-radius:10px;background:#dcfce7"></div>
<div class="a t" style="left:1157px;top:845px;font-size:12px;line-height:16px;color:#166534;font-weight:normal;-webkit-text-stroke:0.3px #166534;width:59px;text-align:center;"><span class="k" style="--k:0.89;transform-origin:center 50%">ชำระแล้ว</span></div>
<div class="a" style="left:1259px;top:836px;width:136px;height:32px;background:#fff;border:1px solid #d9dce3;border-radius:6px"></div>
<div class="a t" style="left:1270px;top:844px;font-size:13px;line-height:18px;color:#1f2937;font-weight:normal;-webkit-text-stroke:0.15px #1f2937;"><span class="k" style="--k:0.86">ชำระแล้ว</span></div>
<svg class="a ic" style="left:1366px;top:844px;color:#4b5563;" width="16" height="16" viewBox="0 0 24 24" stroke-width="1.7"><path d="M6 9l6 6 6-6"/></svg>
<div class="a" style="left:273px;top:879px;width:1134px;height:53px;background:#fff;border-bottom:1px solid #e8eaee"></div>
<svg class="a ic" style="left:282px;top:898px;color:#6b7280;" width="12" height="14" viewBox="0 0 24 24" stroke-width="1.8"><path d="M9 18l6-6-6-6"/></svg>
<div class="a t" style="left:315px;top:897px;font-size:14px;line-height:18px;color:#1e3a5f;font-weight:bold;"><span class="k" style="--k:0.91">RCP6902-02</span></div>
<div class="a" style="left:400px;top:897px;width:30px;height:17px;border-radius:4px;background:#eef4fd"></div>
<svg class="a ic" style="left:405px;top:901px;color:#5b6b85;" width="11" height="9" viewBox="0 4 24 16" stroke-width="2.6"><path d="M9 17H7A5 5 0 0 1 7 7h2M15 7h2a5 5 0 1 1 0 10h-2M8 12h8"/></svg>
<div class="a t" style="left:418px;top:898px;font-size:10.5px;line-height:15px;color:#1e3a5f;font-weight:bold;">2</div>
<div class="a" style="left:462px;top:891px;width:85px;height:27px;border-radius:6px;border:1px solid #e8bca5;background:#f6e9e3"></div>
<div class="a t" style="left:462px;top:897px;font-size:13px;line-height:18px;color:#9a3412;font-weight:normal;-webkit-text-stroke:0.4px #9a3412;width:85px;text-align:center;"><span class="k" style="--k:0.9;transform-origin:center 50%">ใบกำกับภาษี</span></div>
<div class="a t" style="left:657px;top:897px;font-size:14px;line-height:18px;color:#4b5563;font-weight:normal;">11/02/69</div>
<div class="a t" style="left:735px;top:897px;font-size:14px;line-height:18px;color:#4b5563;font-weight:normal;">-</div>
<div class="a t" style="left:815px;top:897px;font-size:14px;line-height:18px;color:#4b5563;font-weight:normal;"><span class="k" style="--k:0.87">ห้างหุ้นส่วนจำกัด ดีเอฟจี</span></div>
<div class="a t" style="left:900px;top:897px;font-size:14px;line-height:18px;color:#374151;font-weight:normal;-webkit-text-stroke:0.2px #374151;width:144px;text-align:right;"><span class="k" style="--k:0.92;transform-origin:100% 50%">27,595.30</span></div>
<div class="a" style="left:1068px;top:894px;width:65px;height:23px;border-radius:4px;background:#f1f3f5"></div>
<svg class="a ic" style="left:1076px;top:900px;color:#4b5563;" width="12" height="11" viewBox="0 0 24 22" stroke-width="2.4"><rect x="2" y="3" width="20" height="16" rx="2"/><path d="M2 9h20"/></svg>
<div class="a t" style="left:1092px;top:898px;font-size:12px;line-height:16px;color:#4b5563;font-weight:normal;"><span class="k" style="--k:0.88">โอนเงิน</span></div>
<div class="a" style="left:1157px;top:896px;width:59px;height:20px;border-radius:10px;background:#dcfce7"></div>
<div class="a t" style="left:1157px;top:898px;font-size:12px;line-height:16px;color:#166534;font-weight:normal;-webkit-text-stroke:0.3px #166534;width:59px;text-align:center;"><span class="k" style="--k:0.89;transform-origin:center 50%">ชำระแล้ว</span></div>
<div class="a" style="left:1259px;top:889px;width:136px;height:32px;background:#fff;border:1px solid #d9dce3;border-radius:6px"></div>
<div class="a t" style="left:1270px;top:897px;font-size:13px;line-height:18px;color:#1f2937;font-weight:normal;-webkit-text-stroke:0.15px #1f2937;"><span class="k" style="--k:0.86">ชำระแล้ว</span></div>
<svg class="a ic" style="left:1366px;top:897px;color:#4b5563;" width="16" height="16" viewBox="0 0 24 24" stroke-width="1.7"><path d="M6 9l6 6 6-6"/></svg>
</body></html>
